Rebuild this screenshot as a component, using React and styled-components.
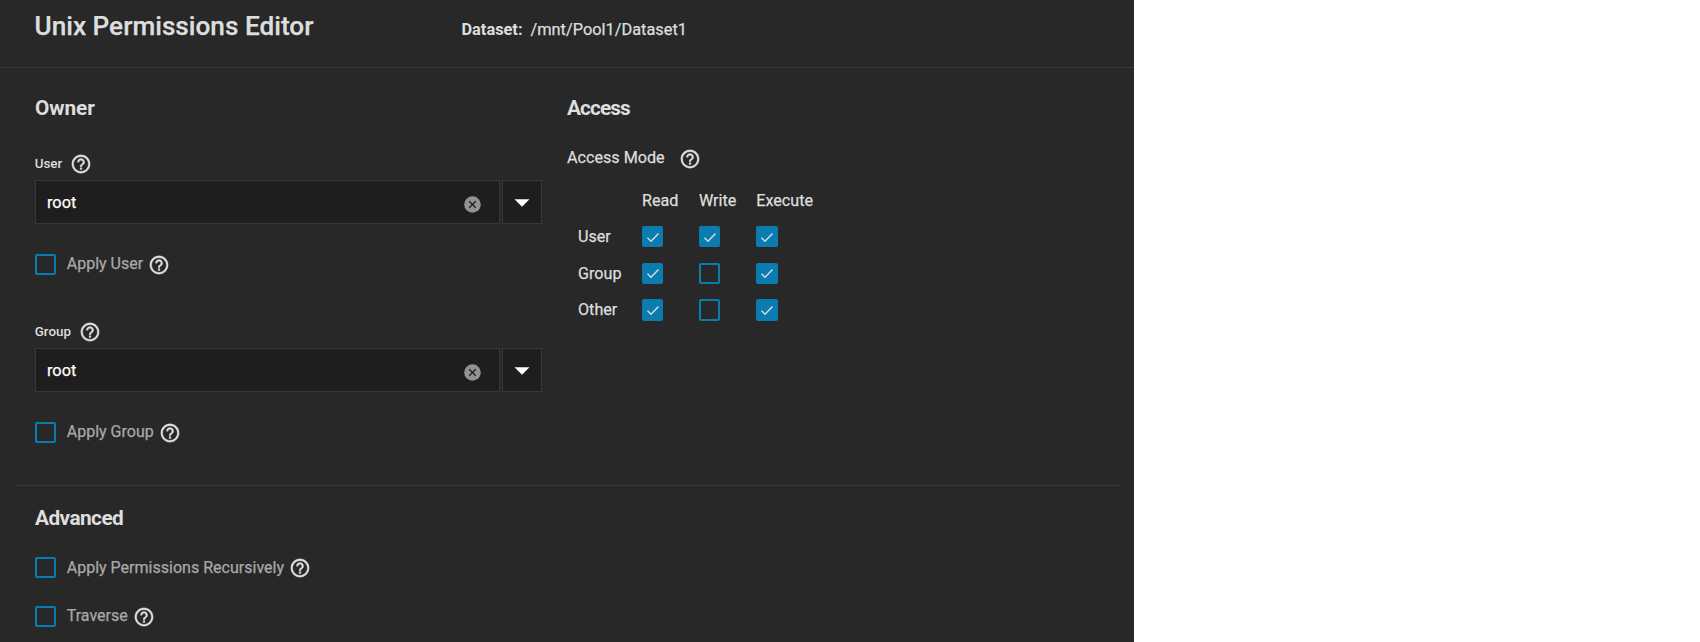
import React from 'react';
import styled, { createGlobalStyle } from 'styled-components';

const GlobalStyle = createGlobalStyle`
  * { box-sizing: border-box; }
  body {
    margin: 0;
    background: #fff;
    font-family: Roboto, "Liberation Sans", sans-serif;
    font-size: 16.15px;
    color: #dedede;
    -webkit-text-stroke: 0.25px currentColor;
  }
`;

const Panel = styled.main`
  width: 1134px;
  height: 642px;
  overflow: hidden;
  background: #282828;
`;

const Header = styled.header`
  display: flex;
  align-items: flex-start;
  height: 68px;
  padding-left: 34.5px;
  border-bottom: 1px solid #383838;
`;

const Title = styled.h1`
  width: 427px;
  margin: 0;
  font-size: 26.2px;
  font-weight: 500;
  line-height: 52px;
`;

const Dataset = styled.div`
  font-size: 16.35px;
  line-height: 59px;
  white-space: pre;
`;

const DatasetLabel = styled.strong`
  margin-right: 8px;
  font-weight: 700;
  -webkit-text-stroke: 0;
`;

const Columns = styled.div`
  display: flex;
  height: 417px;
  padding: 28px 0 0 35px;
`;

const OwnerColumn = styled.section`
  width: 532px;
`;

const AccessColumn = styled.section`
  flex: 1;
`;

const SectionTitle = styled.h2`
  margin: 0;
  font-size: 20.8px;
  font-weight: 700;
  line-height: 25px;
  letter-spacing: ${(p) => p.$tracking || '-0.55px'};
  -webkit-text-stroke: 0;
`;

const FieldGroup = styled.div`
  height: 168px;
  padding-top: 32px;
`;

const FieldLabel = styled.div`
  display: flex;
  align-items: center;
  gap: 8px;
  height: 21px;
  margin: 0 0 6px -0.3px;
  font-size: 13.4px;
  font-weight: 500;
  -webkit-text-stroke: 0;
`;

const Combo = styled.div`
  display: flex;
  gap: 2px;
  height: 44px;
  margin-bottom: 31px;
`;

const ComboInput = styled.div`
  display: flex;
  align-items: center;
  justify-content: space-between;
  width: 465px;
  padding: 0 18px 0 11px;
  border: 1px solid #383838;
  background: #1e1e1e;
  color: #fff;
  font-size: 16.3px;
`;

const ClearIcon = styled.svg`
  width: 17px;
  height: 17px;
  margin-top: 5px;
`;

const ComboButton = styled.div`
  display: flex;
  align-items: center;
  justify-content: center;
  width: 40px;
  padding-top: 1px;
  border: 1px solid #383838;
  background: #1e1e1e;
`;

const CheckRow = styled.div`
  display: flex;
  height: 21px;
  margin-top: ${(p) => p.$top || 0}px;
  color: #a9a9a9;
  font-size: 16.05px;
`;

const CheckText = styled.span`
  margin: 0 5px 0 10.3px;
  line-height: ${(p) => p.$line || 19}px;
`;

const Box = styled.span`
  display: flex;
  align-items: center;
  justify-content: center;
  width: 21.4px;
  height: 21.4px;
  flex: none;
  border: 2px solid #0a7cb0;
  border-radius: 2px;
  background: ${(p) => (p.$checked ? '#0a7cb0' : 'transparent')};
`;

const HelpSvg = styled.svg`
  width: 22px;
  height: 22px;
  flex: none;
  fill: #dedede;
  stroke: #dedede;
  stroke-width: 0.35px;
`;

const AccessMode = styled.div`
  display: flex;
  align-items: center;
  gap: 14.5px;
  height: 22px;
  margin-top: 27px;
`;

const AccessModeText = styled.span`
  margin-top: -2px;
  line-height: 20px;
`;

const Matrix = styled.div`
  display: grid;
  grid-template-columns: 64px 56.9px 57.4px 80px;
  grid-template-rows: 40.1px 36.5px 36.8px 30px;
  padding: 16px 0 0 11px;
`;

const MatrixText = styled.span`
  line-height: ${(p) => (p.$head ? 30 : 21.4)}px;
`;

const Advanced = styled.section`
  margin: 0 14px;
  padding: 20px 0 0 21px;
  border-top: 1px solid #383838;
`;

const Help = () => (
  <HelpSvg viewBox="0 0 24 24">
    <path d="M11 18h2v-2h-2v2zm1-16C6.48 2 2 6.48 2 12s4.48 10 10 10 10-4.48 10-10S17.52 2 12 2zm0 18c-4.41 0-8-3.59-8-8s3.59-8 8-8 8 3.59 8 8-3.59 8-8 8zm0-14c-2.21 0-4 1.79-4 4h2c0-1.1.9-2 2-2s2 .9 2 2c0 2-3 1.75-3 5h2c0-2.25 3-2.5 3-5 0-2.21-1.79-4-4-4z" />
  </HelpSvg>
);

const Check = ({ checked }) => (
  <Box $checked={checked}>
    {checked && (
      <svg width="14" height="12" viewBox="0 0 14 12" fill="none" stroke="#d3dde2" strokeWidth="1.4">
        <path d="M1.5 6.8 5 10.2 12.5 2.4" />
      </svg>
    )}
  </Box>
);

const CheckField = ({ label, top, line }) => (
  <CheckRow $top={top}>
    <Check />
    <CheckText $line={line}>{label}</CheckText>
    <Help />
  </CheckRow>
);

const OwnerField = ({ label, value }) => (
  <FieldGroup>
    <FieldLabel>
      {label}
      <Help />
    </FieldLabel>
    <Combo>
      <ComboInput>
        {value}
        <ClearIcon viewBox="0 0 17 17">
          <circle cx="8.5" cy="8.5" r="8.3" fill="#929292" />
          <path d="M5.2 5.2l6.6 6.6M11.8 5.2l-6.6 6.6" stroke="#1e1e1e" strokeWidth="1.3" />
        </ClearIcon>
      </ComboInput>
      <ComboButton>
        <svg width="16" height="8" viewBox="0 0 16 8">
          <path d="M.5.3h15L8 7.8z" fill="#fff" />
        </svg>
      </ComboButton>
    </Combo>
    <CheckField label={`Apply ${label}`} top={-1} />
  </FieldGroup>
);

const modes = [
  ['User', [true, true, true]],
  ['Group', [true, false, true]],
  ['Other', [true, false, true]],
];

export default function App() {
  return (
    <>
      <GlobalStyle />
      <Panel>
        <Header>
          <Title>Unix Permissions Editor</Title>
          <Dataset>
            <DatasetLabel>Dataset:</DatasetLabel>
            /mnt/Pool1/Dataset1
          </Dataset>
        </Header>
        <Columns>
          <OwnerColumn>
            <SectionTitle $tracking="-0.05px">Owner</SectionTitle>
            <OwnerField label="User" value="root" />
            <OwnerField label="Group" value="root" />
          </OwnerColumn>
          <AccessColumn>
            <SectionTitle $tracking="-0.9px">Access</SectionTitle>
            <AccessMode>
              <AccessModeText>Access Mode</AccessModeText>
              <Help />
            </AccessMode>
            <Matrix>
              <span />
              {['Read', 'Write', 'Execute'].map((name) => (
                <MatrixText key={name} $head>{name}</MatrixText>
              ))}
              {modes.map(([who, flags]) => (
                <React.Fragment key={who}>
                  <MatrixText>{who}</MatrixText>
                  {flags.map((on, i) => <Check key={i} checked={on} />)}
                </React.Fragment>
              ))}
            </Matrix>
          </AccessColumn>
        </Columns>
        <Advanced>
          <SectionTitle>Advanced</SectionTitle>
          <CheckField label="Apply Permissions Recursively" top={26} line={21} />
          <CheckField label="Traverse" top={28} />
        </Advanced>
      </Panel>
    </>
  );
}
